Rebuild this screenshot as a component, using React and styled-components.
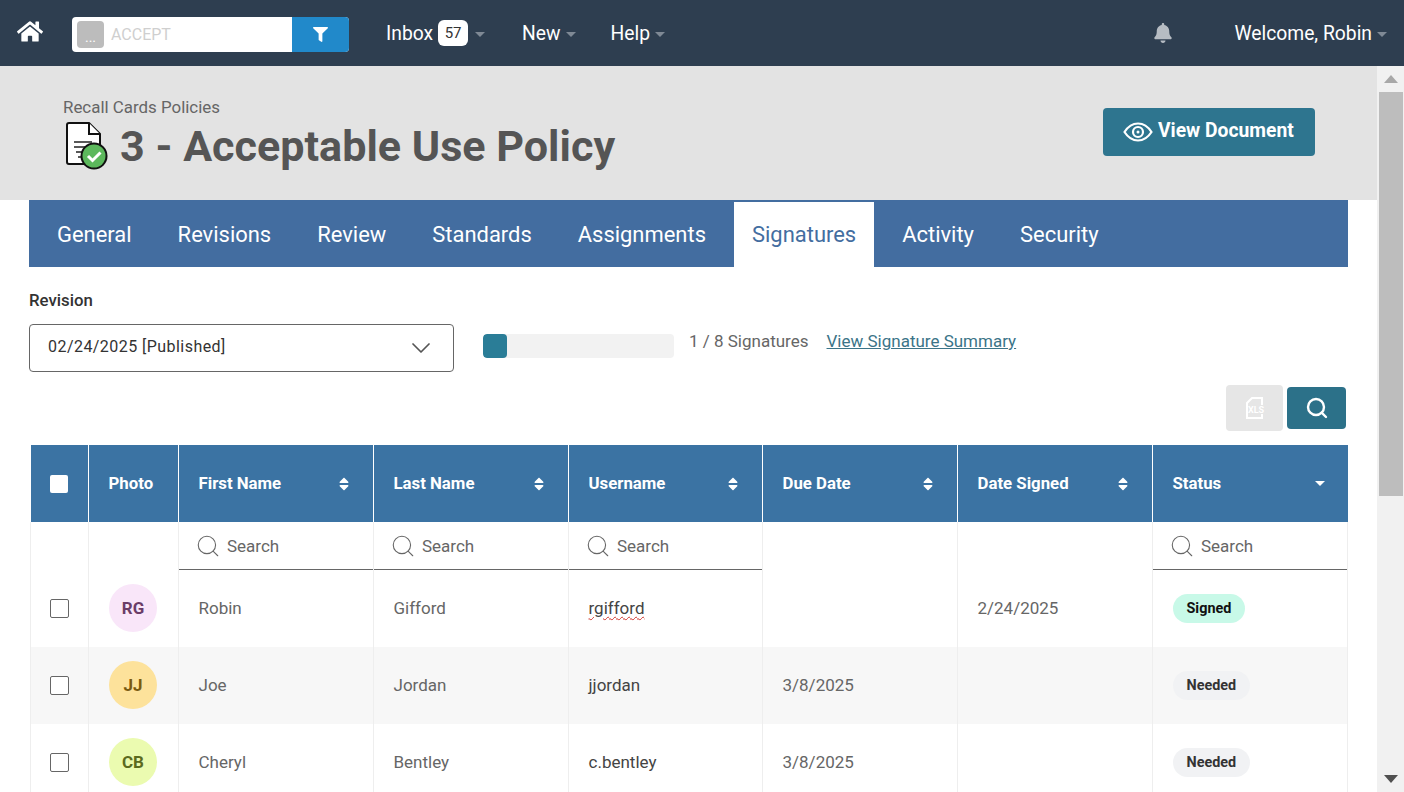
import React from "react";
import styled, { createGlobalStyle } from "styled-components";
import { FaHome, FaFilter, FaBell, FaSort } from "react-icons/fa";
import { Search, ChevronDown } from "lucide-react";

const GlobalStyle = createGlobalStyle`
  html, body {
    margin: 0;
    height: 100%;
    overflow: hidden;
    background: #fff;
    font-family: Roboto, "Liberation Sans", sans-serif;
  }
  * { box-sizing: border-box; }
`;

const tabs = ["General", "Revisions", "Review", "Standards", "Assignments", "Signatures", "Activity", "Security"];

const columns = [
  { label: "First Name", search: true },
  { label: "Last Name", search: true },
  { label: "Username", search: true },
  { label: "Due Date" },
  { label: "Date Signed" },
];

const people = [
  { initials: "RG", bg: "#f9e6f9", fg: "#6b3d68", first: "Robin", last: "Gifford", user: "rgifford", typo: true, due: "", signed: "2/24/2025", status: "Signed" },
  { initials: "JJ", bg: "#fde29b", fg: "#7a5a10", first: "Joe", last: "Jordan", user: "jjordan", due: "3/8/2025", signed: "", status: "Needed" },
  { initials: "CB", bg: "#ebfbb0", fg: "#5c6b1e", first: "Cheryl", last: "Bentley", user: "c.bentley", due: "3/8/2025", signed: "", status: "Needed" },
];

function App() {
  return (
    <Page>
      <GlobalStyle />
      <TopBar>
        <HomeLink><FaHome size={29} /></HomeLink>
        <SearchGroup>
          <ScopeChip>...</ScopeChip>
          <SearchText>ACCEPT</SearchText>
          <FilterButton><FaFilter size={15} /></FilterButton>
        </SearchGroup>
        <NavItem $ml={37}>
          Inbox<InboxBadge>57</InboxBadge><Caret $ml={7} />
        </NavItem>
        <NavItem $ml={37}>New<Caret /></NavItem>
        <NavItem $ml={35}>Help<Caret /></NavItem>
        <BellWrap><FaBell size={20} /></BellWrap>
        <NavItem $ml={61}>Welcome, Robin<Caret /></NavItem>
      </TopBar>
      <Body>
        <Content>
          <Hero>
            <HeroText>
              <Crumb>Recall Cards Policies</Crumb>
              <TitleRow>
                <DocIcon />
                <Title>3 - Acceptable Use Policy</Title>
              </TitleRow>
            </HeroText>
            <ViewButton><EyeIcon /><ViewLabel>View Document</ViewLabel></ViewButton>
          </Hero>
          <Main>
            <TabBar>
              {tabs.map((t) => (
                <Tab key={t} $active={t === "Signatures"}>{t}</Tab>
              ))}
            </TabBar>
            <FieldLabel>Revision</FieldLabel>
            <RevisionRow>
              <SelectBox>
                <SelectValue>02/24/2025 [Published]</SelectValue>
                <ChevronDown size={32} strokeWidth={1.3} color="#555" />
              </SelectBox>
              <Progress><ProgressFill style={{ width: `${(1 / 8) * 100}%` }} /></Progress>
              <Count>1 / 8 Signatures</Count>
              <SummaryLink href="#">View Signature Summary</SummaryLink>
            </RevisionRow>
            <Tools>
              <XlsButton><XlsIcon /></XlsButton>
              <ToolButton><Search size={24} strokeWidth={2.4} /></ToolButton>
            </Tools>
            <Table>
              <colgroup>
                <col style={{ width: 58 }} />
                <col style={{ width: 90 }} />
                <col style={{ width: 195 }} />
                <col style={{ width: 195 }} />
                <col style={{ width: 194 }} />
                <col style={{ width: 195 }} />
                <col style={{ width: 195 }} />
                <col style={{ width: 195 }} />
              </colgroup>
              <thead>
                <tr>
                  <Th $center><HeadCheck /></Th>
                  <Th><HeadLabel>Photo</HeadLabel></Th>
                  {columns.map((c) => (
                    <Th key={c.label}>
                      <HeadInner><HeadLabel>{c.label}</HeadLabel><FaSort size={16} /></HeadInner>
                    </Th>
                  ))}
                  <Th>
                    <HeadInner><HeadLabel>Status</HeadLabel><StatusCaret /></HeadInner>
                  </Th>
                </tr>
              </thead>
              <tbody>
                <tr>
                  <FilterCell />
                  <FilterCell />
                  {columns.map((c) =>
                    c.search ? (
                      <FilterCell key={c.label}><FilterBox><Search size={26} strokeWidth={1} />Search</FilterBox></FilterCell>
                    ) : (
                      <FilterCell key={c.label} />
                    )
                  )}
                  <FilterCell><FilterBox><Search size={26} strokeWidth={1} />Search</FilterBox></FilterCell>
                </tr>
                {people.map((p, i) => (
                  <Row key={p.initials} $alt={i % 2 === 1}>
                    <Td $center $flush><RowCheck /></Td>
                    <Td $flush><Avatar $bg={p.bg} $fg={p.fg}>{p.initials}</Avatar></Td>
                    <Td>{p.first}</Td>
                    <Td>{p.last}</Td>
                    <Td $dark>{p.typo ? <Misspelt>{p.user}</Misspelt> : p.user}</Td>
                    <Td>{p.due}</Td>
                    <Td>{p.signed}</Td>
                    <Td $flush><StatusPill $signed={p.status === "Signed"}>{p.status}</StatusPill></Td>
                  </Row>
                ))}
              </tbody>
            </Table>
          </Main>
        </Content>
        <ScrollBar>
          <ScrollArrow><UpTriangle /></ScrollArrow>
          <Thumb />
          <ScrollArrow $bottom><DownTriangle /></ScrollArrow>
        </ScrollBar>
      </Body>
    </Page>
  );
}

function DocIcon() {
  return (
    <svg width="46" height="50" viewBox="0 0 46 50" style={{ flex: "none" }}>
      <path d="M5 2h20l11 11v30H5a2 2 0 0 1-2-2V4a2 2 0 0 1 2-2z" fill="#fff" stroke="#111" strokeWidth="2" />
      <path d="M25 2v11h11" fill="#fff" stroke="#111" strokeWidth="2" />
      <path d="M10 21h18M10 26h14M12 31h10M14 36h8" stroke="#222" strokeWidth="1.6" />
      <circle cx="30" cy="35" r="13.500" fill="#111" />
      <circle cx="30" cy="35" r="11.500" fill="#5cb85c" />
      <path d="M24 35l4.500 4.500 8-8" fill="none" stroke="#fff" strokeWidth="3" />
    </svg>
  );
}

function EyeIcon() {
  return (
    <svg width="30" height="20" viewBox="0 0 30 20" fill="none" stroke="#fff" style={{ flex: "none" }}>
      <path d="M1.500 10C5 4.500 9.500 1.500 15 1.500S25 4.500 28.500 10C25 15.500 20.500 18.500 15 18.500S5 15.500 1.500 10z" strokeWidth="2.200" />
      <circle cx="15" cy="10" r="5" strokeWidth="2.200" />
      <circle cx="15" cy="10" r="1.500" fill="#fff" stroke="none" />
    </svg>
  );
}

function XlsIcon() {
  return (
    <svg width="20" height="22" viewBox="0 0 20 22">
      <path d="M2 6l5-5h10v20H2z" fill="none" stroke="#fff" strokeWidth="2" />
      <rect x="4" y="8" width="16" height="9" fill="#e6e6e6" />
      <text x="3" y="16" fontFamily="Roboto, sans-serif" fontWeight="700" fontSize="9" fill="#fff">XLS</text>
    </svg>
  );
}

export default App;

const Page = styled.div`
  display: flex;
  flex-direction: column;
  height: 792px;
  overflow: hidden;
`;

const TopBar = styled.header`
  display: flex;
  align-items: center;
  flex: none;
  height: 66px;
  padding: 0 17px;
  background: #2e3e50;
  color: #fff;
`;

const HomeLink = styled.div`
  display: flex;
  width: 26px;
  justify-content: center;
  margin-top: -4px;
`;

const SearchGroup = styled.div`
  display: flex;
  align-items: center;
  width: 277px;
  height: 35px;
  margin-top: 2px;
  margin-left: 29px;
  padding-left: 5px;
  background: #fff;
  border-radius: 4px;
  overflow: hidden;
`;

const ScopeChip = styled.div`
  width: 27px;
  height: 27px;
  background: #bcbcbc;
  border-radius: 4px;
  color: #fff;
  font-size: 14px;
  text-align: center;
  line-height: 33px;
`;

const SearchText = styled.div`
  flex: 1;
  margin-left: 7px;
  color: #cfcfcf;
  font-size: 16px;
`;

const FilterButton = styled.div`
  display: flex;
  align-items: center;
  justify-content: center;
  width: 57px;
  height: 100%;
  background: #2189ca;
`;

const NavItem = styled.div`
  display: flex;
  align-items: center;
  margin-left: ${(p) => p.$ml}px;
  font-size: 19.3px;
  white-space: nowrap;
`;

const InboxBadge = styled.span`
  width: 30px;
  height: 26px;
  margin-left: 5px;
  background: #fff;
  border-radius: 6px;
  color: #333;
  font-size: 15px;
  line-height: 27px;
  text-align: center;
`;

const Caret = styled.span`
  width: 0;
  height: 0;
  margin-left: ${(p) => p.$ml || 5}px;
  margin-top: 3px;
  border-left: 5px solid transparent;
  border-right: 5px solid transparent;
  border-top: 5px solid #7f8995;
`;

const BellWrap = styled.div`
  display: flex;
  margin-left: auto;
  color: #b6bcc3;
`;

const Body = styled.div`
  display: flex;
  flex: 1;
  min-height: 0;
`;

const Content = styled.div`
  flex: 1;
  min-width: 0;
  overflow: hidden;
`;

const Hero = styled.section`
  display: flex;
  align-items: flex-start;
  justify-content: space-between;
  height: 134px;
  padding: 31px 62px 0 63px;
  background: #e3e3e3;
`;

const HeroText = styled.div`
  display: flex;
  flex-direction: column;
`;

const Crumb = styled.div`
  color: #666;
  font-size: 16.9px;
  line-height: 20px;
`;

const TitleRow = styled.div`
  display: flex;
  align-items: center;
  gap: 10px;
  margin-top: 3px;
  margin-left: 1px;
`;

const Title = styled.h1`
  margin: 2px 0 0;
  color: #555;
  font-size: 43.1px;
  font-weight: 700;
  line-height: 50px;
  white-space: nowrap;
`;

const ViewButton = styled.button`
  display: flex;
  align-items: center;
  gap: 5px;
  width: 212px;
  height: 48px;
  margin-top: 11px;
  padding: 0 0 0 20px;
  background: #2e758f;
  border: 0;
  border-radius: 4px;
  color: #fff;
  font-family: inherit;
  font-size: 19.3px;
  font-weight: 700;
`;

const ViewLabel = styled.span`
  margin-bottom: 3px;
`;

const Main = styled.main`
  padding: 0 29px;
`;

const TabBar = styled.nav`
  display: flex;
  align-items: flex-end;
  gap: 10px;
  height: 67px;
  padding-left: 10px;
  background: #436da0;
`;

const Tab = styled.div`
  display: flex;
  align-items: center;
  height: 65px;
  padding: 0 18px;
  background: ${(p) => (p.$active ? "#fff" : "transparent")};
  color: ${(p) => (p.$active ? "#436da0" : "#fff")};
  font-size: 21.95px;
`;

const FieldLabel = styled.div`
  margin-top: 24px;
  color: #333;
  font-size: 16.8px;
  font-weight: 500;
  line-height: 19px;
`;

const RevisionRow = styled.div`
  display: flex;
  align-items: flex-start;
  margin-top: 14px;
`;

const SelectBox = styled.div`
  display: flex;
  align-items: center;
  justify-content: space-between;
  width: 425px;
  height: 48px;
  padding: 0 16px 0 18px;
  border: 1px solid #666;
  border-radius: 4px;
  color: #333;
  font-size: 16px;
  letter-spacing: 0.45px;
`;

const SelectValue = styled.span`
  margin-bottom: 3px;
`;

const Progress = styled.div`
  width: 191px;
  height: 24px;
  margin: 10px 0 0 29px;
  background: #f2f2f2;
  border-radius: 4px;
  overflow: hidden;
`;

const ProgressFill = styled.div`
  height: 100%;
  background: #2a7d97;
  border-radius: 4px;
`;

const Count = styled.div`
  margin: 7px 0 0 15px;
  color: #666;
  font-size: 17px;
  line-height: 20px;
`;

const SummaryLink = styled.a`
  margin: 7px 0 0 18px;
  color: #3b7488;
  font-size: 17px;
  line-height: 20px;
`;

const Tools = styled.div`
  display: flex;
  align-items: center;
  justify-content: flex-end;
  gap: 4px;
  height: 46px;
  margin-top: 13px;
  padding-right: 2px;
`;

const XlsButton = styled.div`
  display: flex;
  align-items: center;
  justify-content: center;
  width: 57px;
  height: 46px;
  background: #e6e6e6;
  border-radius: 4px;
`;

const ToolButton = styled.div`
  display: flex;
  align-items: center;
  justify-content: center;
  width: 59px;
  height: 42px;
  background: #2c7189;
  border-radius: 4px;
  color: #fff;
`;

const Table = styled.table`
  width: 1317px;
  margin: 14px 0 0 1px;
  border-collapse: collapse;
  table-layout: fixed;
`;

const Th = styled.th`
  height: 77px;
  padding: 0 0 0 ${(p) => (p.$center ? 0 : 19.5)}px;
  background: #3b73a3;
  border-left: 1px solid #fff;
  color: #fff;
  font-size: 16.8px;
  font-weight: 700;
  text-align: ${(p) => (p.$center ? "center" : "left")};
  &:first-child { border-left: 0; }
`;

const HeadLabel = styled.span`
  display: block;
  margin-bottom: 2px;
`;

const HeadInner = styled.div`
  display: flex;
  align-items: center;
  justify-content: space-between;
  padding-right: 21px;
`;

const HeadCheck = styled.span`
  display: block;
  width: 18px;
  height: 18px;
  margin: 0 auto;
  background: #fff;
  border-radius: 2px;
`;

const StatusCaret = styled.span`
  width: 0;
  height: 0;
  margin-right: 2px;
  border-left: 5px solid transparent;
  border-right: 5px solid transparent;
  border-top: 5px solid #fff;
`;

const FilterCell = styled.td`
  height: 48px;
  padding: 0;
  border-left: 1px solid #eee;
  border-right: 1px solid #eee;
`;

const FilterBox = styled.div`
  display: flex;
  align-items: center;
  gap: 6px;
  height: 48px;
  padding: 1px 0 0 16px;
  border-bottom: 1px solid #666;
  color: #666;
  font-size: 17px;
`;

const Row = styled.tr`
  background: ${(p) => (p.$alt ? "#f7f7f7" : "#fff")};
`;

const Td = styled.td`
  height: 77px;
  padding: 0 0 ${(p) => (p.$flush ? 0 : 2)}px ${(p) => (p.$center ? 0 : 19.5)}px;
  border-left: 1px solid #eee;
  border-right: 1px solid #eee;
  color: ${(p) => (p.$dark ? "#444" : "#666")};
  font-size: 17px;
`;

const RowCheck = styled.span`
  display: block;
  width: 19px;
  height: 19px;
  margin-left: 19px;
  background: #fff;
  border: 1px solid #666;
  border-radius: 2px;
`;

const Avatar = styled.div`
  display: flex;
  align-items: center;
  justify-content: center;
  width: 48px;
  height: 48px;
  margin: -1px 0 1px 0.5px;
  background: ${(p) => p.$bg};
  border-radius: 50%;
  color: ${(p) => p.$fg};
  font-size: 17px;
  font-weight: 700;
`;

const Misspelt = styled.span`
  text-decoration: underline wavy #d0342c 1px;
  text-underline-offset: 2px;
`;

const StatusPill = styled.span`
  display: inline-block;
  padding: 0 14px;
  height: 29px;
  background: ${(p) => (p.$signed ? "#c8f9e8" : "#f1f2f4")};
  border-radius: 15px;
  color: ${(p) => (p.$signed ? "#111" : "#333")};
  font-size: 14.4px;
  font-weight: 700;
  line-height: 29px;
`;

const ScrollBar = styled.aside`
  display: flex;
  flex-direction: column;
  align-items: center;
  flex: none;
  width: 27px;
  background: #f1f1f1;
`;

const ScrollArrow = styled.div`
  display: flex;
  align-items: center;
  justify-content: center;
  width: 100%;
  height: 26px;
  margin-top: ${(p) => (p.$bottom ? "auto" : 0)};
`;

const UpTriangle = styled.span`
  border-left: 7px solid transparent;
  border-right: 7px solid transparent;
  border-bottom: 8px solid #a8a8a8;
`;

const DownTriangle = styled.span`
  border-left: 7px solid transparent;
  border-right: 7px solid transparent;
  border-top: 8px solid #505050;
`;

const Thumb = styled.div`
  width: 24px;
  height: 404px;
  background: #bdbdbd;
`;
